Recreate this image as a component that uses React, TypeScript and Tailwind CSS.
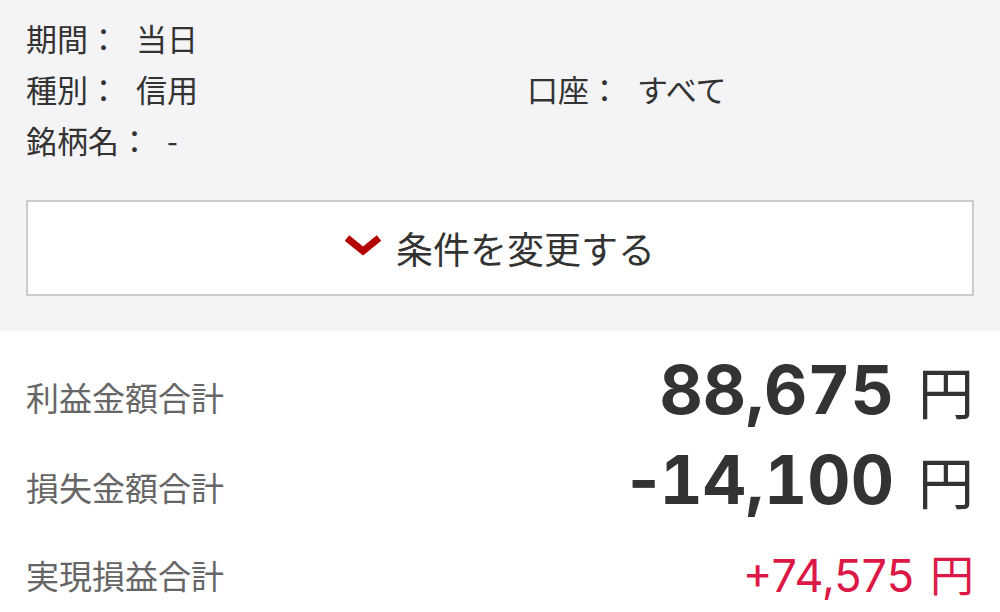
import React from "react";

const jp = "font-['Noto_Sans_CJK_JP',sans-serif]";
const num = "font-['Inter','Noto_Sans_CJK_JP',sans-serif]";

const conditions: { label: string; value: string }[][] = [
  [{ label: "期間", value: "当日" }],
  [
    { label: "種別", value: "信用" },
    { label: "口座", value: "すべて" },
  ],
  [{ label: "銘柄名", value: "-" }],
];

const ConditionItem: React.FC<{ label: string; value: string }> = ({ label, value }) => (
  <div className="flex whitespace-nowrap">
    <span>{label}：</span>
    <span className="ml-[17px]">{value}</span>
  </div>
);

const App: React.FC = () => {
  return (
    <div className={`min-h-screen w-[1000px] bg-white text-[#333333] ${jp}`}>
      <section className="bg-[#f4f4f6] px-[26px] pt-[12px] pb-[35px]">
        <div className="text-[31px] leading-[51px]">
          {conditions.map((row, i) => (
            <div key={i} className="grid grid-cols-[501px_1fr]">
              {row.map((c) => (
                <ConditionItem key={c.label} label={c.label} value={c.value} />
              ))}
            </div>
          ))}
        </div>

        <button
          type="button"
          className="mt-[35px] flex h-[96px] w-full items-center justify-center gap-[15px] border-2 border-[#cccccc] bg-white"
        >
          <svg width="36" height="24" viewBox="0 0 36 24" className="mt-[-4px]">
            <path d="M2 4 L18 17 L34 4" fill="none" stroke="#b50000" strokeWidth="7" />
          </svg>
          <span className="text-[37px] leading-none text-[#333333]">条件を変更する</span>
        </button>
      </section>

      <section className="px-[26px]">
        <div className="mt-[25px] flex items-baseline justify-between">
          <span className="relative top-[-3px] text-[33px] leading-none text-[#666666]">利益金額合計</span>
          <span className="flex items-baseline">
            <span className={`${num} text-[67px] font-bold leading-none tabular-nums`}>88,675</span>
            <span className="ml-[24px] text-[56px] leading-none">円</span>
          </span>
        </div>

        <div className="mt-[23px] flex items-baseline justify-between">
          <span className="relative top-[-3px] text-[33px] leading-none text-[#666666]">損失金額合計</span>
          <span className="flex items-baseline">
            <span className={`${num} text-[67px] font-bold leading-none`}>
              -<span className="tabular-nums">14,100</span>
            </span>
            <span className="ml-[24px] text-[56px] leading-none">円</span>
          </span>
        </div>

        <div className="mt-[38px] flex items-baseline justify-between text-[#dc1846]">
          <span className="relative top-[-3px] text-[33px] leading-none text-[#666666]">実現損益合計</span>
          <span className="flex items-baseline">
            <span className={`${num} text-[45px] leading-none`}>+74,575</span>
            <span className="ml-[16px] text-[44px] leading-none">円</span>
          </span>
        </div>
      </section>
    </div>
  );
};

export default App;
